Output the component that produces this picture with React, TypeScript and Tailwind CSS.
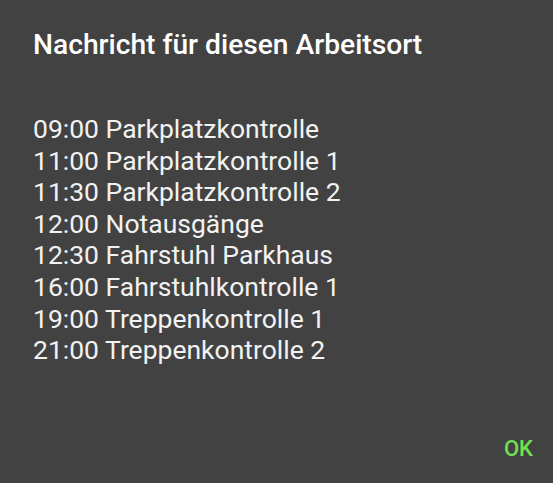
const entries = [
  "09:00 Parkplatzkontrolle",
  "11:00 Parkplatzkontrolle 1",
  "11:30 Parkplatzkontrolle 2",
  "12:00 Notausgänge",
  "12:30 Fahrstuhl Parkhaus",
  "16:00 Fahrstuhlkontrolle 1",
  "19:00 Treppenkontrolle 1",
  "21:00 Treppenkontrolle 2",
];

export default function App() {
  return (
    <div
      className="flex h-[483px] w-[553px] flex-col bg-[#424242] text-white"
      style={{ fontFamily: "Roboto, 'Noto Sans', sans-serif" }}
    >
      <h1 className="px-[33px] pt-[27px] text-[28.2px] font-medium leading-[36px]">
        Nachricht für diesen Arbeitsort
      </h1>
      <div className="px-[33px] pt-[50px] text-[26.5px] leading-[31.6px] text-[#f2f2f2]">
        {entries.map((e) => (
          <p key={e}>{e}</p>
        ))}
      </div>
      <div className="mt-auto flex justify-end px-[20px] pb-[16px]">
        <button className="text-[22px] font-medium leading-[36px] text-[#6ee24f]">
          OK
        </button>
      </div>
    </div>
  );
}
